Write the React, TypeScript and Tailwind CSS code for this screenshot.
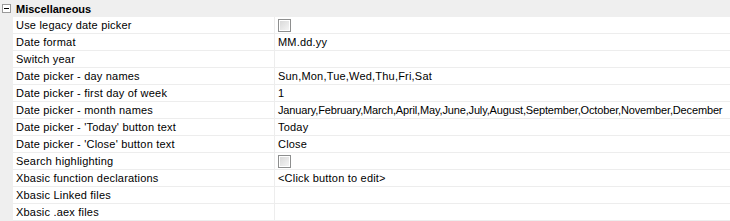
const rows: { name: string; value?: string; check?: boolean; tight?: boolean }[] = [
  { name: "Use legacy date picker", check: true },
  { name: "Date format", value: "MM.dd.yy" },
  { name: "Switch year" },
  { name: "Date picker - day names", value: "Sun,Mon,Tue,Wed,Thu,Fri,Sat" },
  { name: "Date picker - first day of week", value: "1" },
  {
    name: "Date picker - month names",
    value: "January,February,March,April,May,June,July,August,September,October,November,December",
    tight: true,
  },
  { name: "Date picker - 'Today' button text", value: "Today" },
  { name: "Date picker - 'Close' button text", value: "Close" },
  { name: "Search highlighting", check: true },
  { name: "Xbasic function declarations", value: "<Click button to edit>" },
  { name: "Xbasic Linked files" },
  { name: "Xbasic .aex files" },
];

function CheckBox() {
  return (
    <div className="w-[13px] h-[13px] border border-[#8e8f8f] bg-white p-px mt-[2px]">
      <div className="w-full h-full bg-gradient-to-br from-[#d9d9d9] to-[#f4f4f4]" />
    </div>
  );
}

export default function App() {
  return (
    <div
      className="w-[730px] h-[221px] bg-white overflow-hidden text-[11px] leading-[16px] text-black"
      style={{ fontFamily: '"Liberation Sans", Arial, sans-serif' }}
    >
      <div className="flex h-[17px] bg-[#efefef]">
        <div className="w-[13px] shrink-0 flex items-center justify-center">
          <div className="w-[9px] h-[9px] border border-[#9a9a9a] bg-white flex items-center justify-center">
            <div className="w-[5px] h-px bg-black" />
          </div>
        </div>
        <div className="pl-[3px] pt-px font-bold">Miscellaneous</div>
      </div>
      <div className="flex">
        <div className="w-[13px] shrink-0 bg-[#efefef]" />
        <div className="flex-1 flex flex-col">
          {rows.map((r) => (
            <div key={r.name} className="flex h-[17px] border-b border-[#ededed]">
              <div className="w-[262px] shrink-0 pl-[3px] border-r border-[#ededed] whitespace-nowrap tracking-[0.2px]">
                {r.name}
              </div>
              <div
                className={
                  r.tight
                    ? "flex-1 pl-[3px] whitespace-nowrap overflow-hidden tracking-[-0.15px]"
                    : "flex-1 pl-[3px] whitespace-nowrap overflow-hidden tracking-[0.2px]"
                }
              >
                {r.check ? <CheckBox /> : r.value}
              </div>
            </div>
          ))}
        </div>
      </div>
    </div>
  );
}
